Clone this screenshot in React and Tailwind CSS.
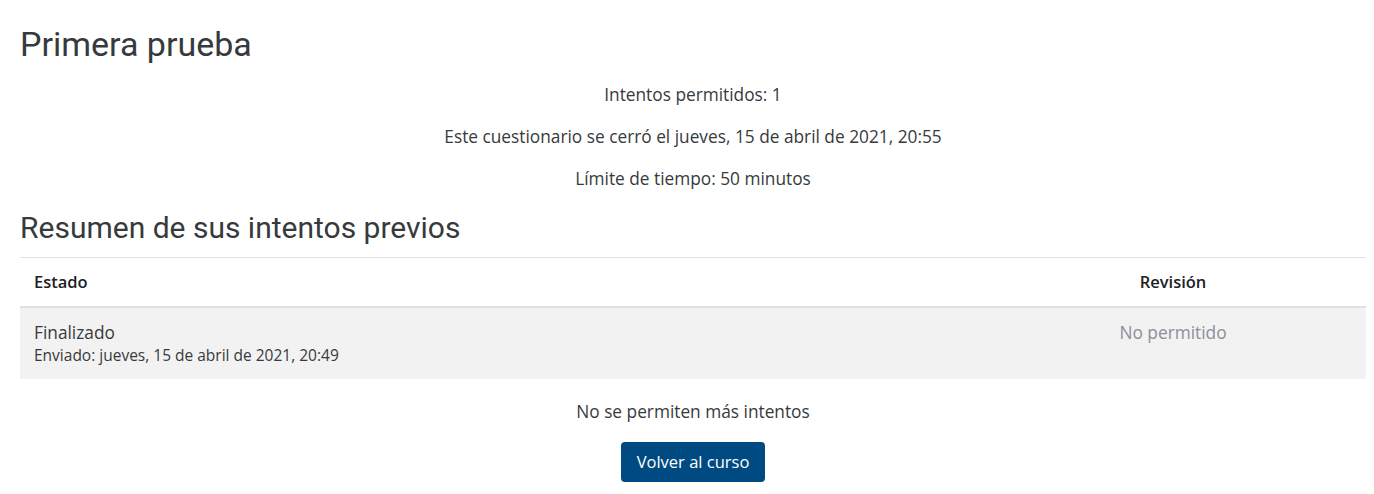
import React from "react";

const body = { fontFamily: '"Open Sans", "Liberation Sans", sans-serif' };
const head = { fontFamily: 'Roboto, "Liberation Sans", sans-serif' };

export default function App() {
  return (
    <div className="min-h-[494px] bg-white pl-[20px] pr-[8px] pt-[24px] text-[#373a3c] text-[17.3px]" style={body}>
      <h2 className="text-[34px] leading-[40px] font-normal text-[#373a3c]" style={head}>Primera prueba</h2>

      <div className="mt-[10px] flex flex-col items-center">
        <p className="h-[42px] leading-[42px]">Intentos permitidos: 1</p>
        <p className="h-[42px] leading-[42px]">Este cuestionario se cerró el jueves, 15 de abril de 2021, 20:55</p>
        <p className="h-[42px] leading-[42px]">Límite de tiempo: 50 minutos</p>
      </div>

      <h3 className="mt-[11px] h-[34px] text-[30px] leading-[34px] font-normal text-[#373a3c]" style={head}>Resumen de sus intentos previos</h3>

      <div className="mt-[12px] border-t border-[#dee2e6]">
        <div className="flex h-[50px] items-center border-b-2 border-[#dee2e6] text-[16.5px] font-semibold text-[#1d2125]">
          <div className="flex-1 px-[14px]">Estado</div>
          <div className="w-[386px] text-center">Revisión</div>
        </div>
        <div className="flex h-[71px] bg-[#f2f2f2] pt-[14px] leading-[22px]">
          <div className="flex-1 px-[14px]">
            <div>Finalizado</div>
            <div className="text-[15.5px]">Enviado: jueves, 15 de abril de 2021, 20:49</div>
          </div>
          <div className="w-[386px] text-center text-[#8a8f99]">No permitido</div>
        </div>
      </div>

      <div className="flex flex-col items-center">
        <p className="mt-[22px] h-[22px] leading-[22px]">No se permiten más intentos</p>
        <button className="mt-[19px] h-[40px] w-[144px] rounded-[4px] bg-[#004a82] text-[16.5px] text-white">Volver al curso</button>
      </div>
    </div>
  );
}
